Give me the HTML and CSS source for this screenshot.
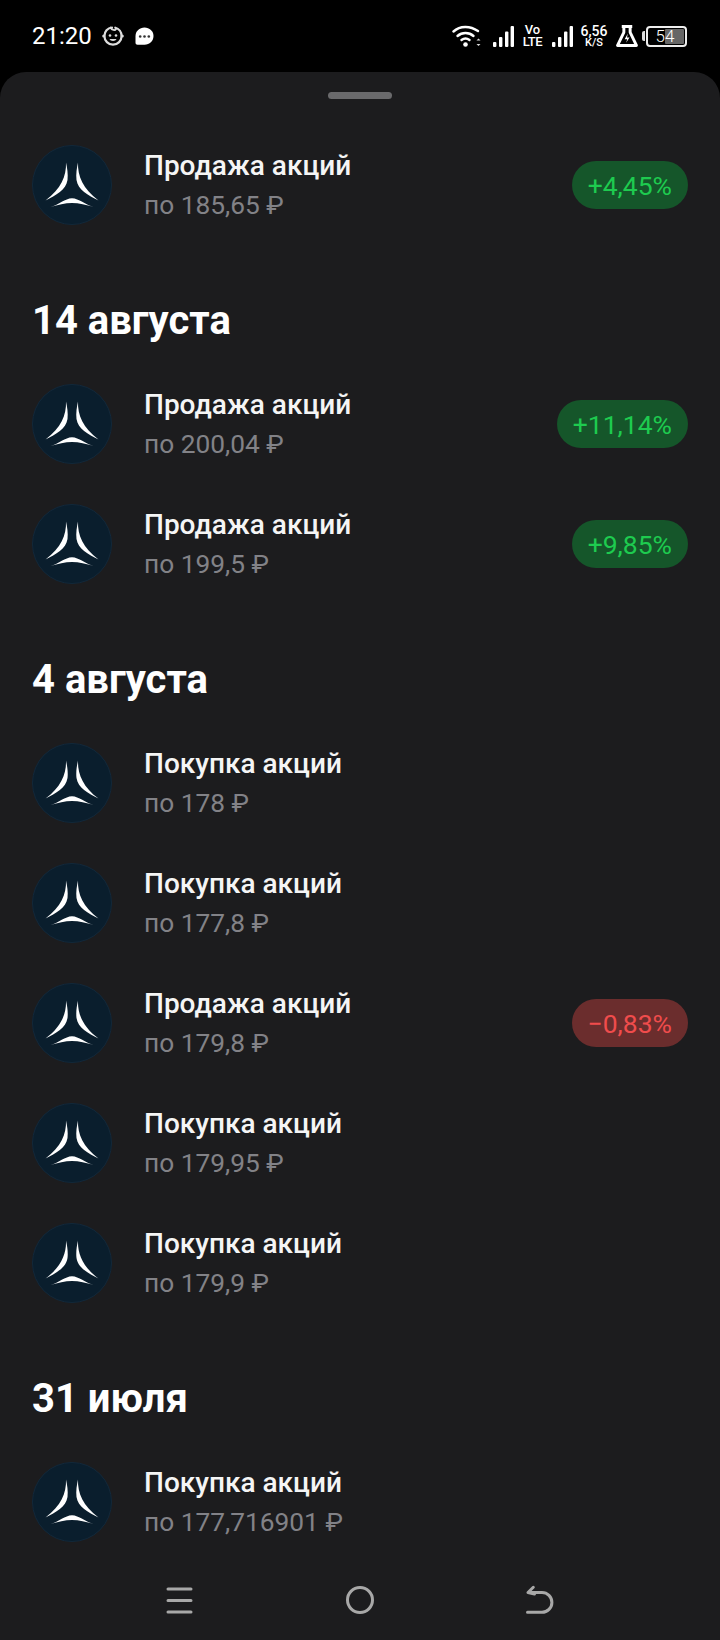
FILE: index.html
```html
<!DOCTYPE html>
<html lang="ru">
<head>
<meta charset="utf-8">
<title>Операции</title>
<link rel="stylesheet" href="styles.css">
</head>
<body>
<svg class="defs" width="0" height="0" aria-hidden="true">
  <symbol id="logo" viewBox="0 0 80 80">
    <circle cx="40" cy="40" r="39.5" fill="#0a1e2d" stroke="#12283a" stroke-width="1"/>
    <path d="M34 17.500C34.500 31 29 44 13.500 55.500C24 50 34 45 35.500 35C36.200 29 35.200 23 34 17.500Z" fill="#fff"/>
    <path d="M46 17.500C45.500 31 51 44 66.500 55.500C56 50 46 45 44.500 35C43.800 29 44.800 23 46 17.500Z" fill="#fff"/>
    <path d="M18.500 62C27 59.500 33 53.500 40 53.200C47 53.500 53 59.500 62 62C54 60 47 58 40 58C33 58 26 60 18.500 62Z" fill="#fff"/>
  </symbol>
</svg>
<div class="phone">
  <header class="status">
    <div class="status-left">
      <span class="time">21:20</span>
      <svg class="ic-baby" viewBox="0 0 22 22"><path d="M10 2.500C5.500 2.800 2.400 6.500 2.400 11c0 4.800 3.800 8.600 8.600 8.600s8.600-3.800 8.600-8.600c0-4-2.700-7.300-6.300-8.300" fill="none" stroke="#ddd" stroke-width="2.200" stroke-linecap="round"/><path d="M8.500 2.500c1.500 2.800 4.500 3.300 5.500 1.500" fill="none" stroke="#ddd" stroke-width="1.800" stroke-linecap="round"/><circle cx="1.800" cy="11" r="1.600" fill="#ddd"/><circle cx="20.200" cy="11" r="1.600" fill="#ddd"/><circle cx="8" cy="10.500" r="1.300" fill="#ddd"/><circle cx="14" cy="10.500" r="1.300" fill="#ddd"/><path d="M7.500 14h7c-.8 2.600-6.200 2.600-7 0Z" fill="#ddd"/></svg>
      <svg class="ic-msg" viewBox="0 0 19 19"><path d="M9.500 0.500c5 0 9 3.600 9 8.500s-4 8.800-9 8.800H2.500c-1.200 0-2-.8-2-2V9C.5 4.100 4.500.5 9.500.5Z" fill="#fff"/><circle cx="5.200" cy="9.500" r="1.300" fill="#333"/><circle cx="9.500" cy="9.500" r="1.300" fill="#333"/><circle cx="13.800" cy="9.500" r="1.300" fill="#333"/></svg>
    </div>
    <div class="status-right">
      <svg class="ic-wifi" viewBox="0 0 29 24"><g fill="none" stroke="#fff" stroke-width="2.400" stroke-linecap="round"><path d="M1.500 7.500C8 1.500 18 1.500 26 7"/><path d="M5.500 12C10 8 17 8 21.500 12"/><path d="M9.500 16C12 14 15 14 17.500 16"/></g><circle cx="13.500" cy="20.500" r="2.300" fill="#fff"/><path d="M26.500 14.500l-2 2h4ZM26.500 22l-2-2h4Z" fill="#ddd"/></svg>
      <svg class="ic-signal" viewBox="0 0 21 21"><rect x="0" y="16" width="3.400" height="5" rx="1" fill="#fff"/><rect x="6" y="11" width="3.400" height="10" rx="1" fill="#fff"/><rect x="12" y="5.500" width="3.400" height="15.500" rx="1" fill="#fff"/><rect x="17.600" y="0" width="3.400" height="21" rx="1" fill="#fff"/></svg>
      <div class="volte"><span>Vo</span><span class="lte">LTE</span></div>
      <svg class="ic-signal sig-2" viewBox="0 0 21 21"><rect x="0" y="16" width="3.400" height="5" rx="1" fill="#fff"/><rect x="6" y="11" width="3.400" height="10" rx="1" fill="#fff"/><rect x="12" y="5.500" width="3.400" height="15.500" rx="1" fill="#fff"/><rect x="17.600" y="0" width="3.400" height="21" rx="1" fill="#fff"/></svg>
      <div class="speed"><span class="speed-num">6,56</span><span class="speed-unit">K/S</span></div>
      <svg class="ic-flask" viewBox="0 0 21 21"><path d="M5.500 1.500h10M7.500 1.500v5.500L1.500 19.500h18L13.500 7V1.500" fill="none" stroke="#fff" stroke-width="2.800" stroke-linejoin="round"/><path d="M11.300 8l-3 5.500h2.400L9.700 17l3.200-5h-2.400Z" fill="#fff"/></svg>
      <div class="battery">
        <span class="bat-tip"></span>
        <div class="bat-body"><span class="bat-fill"></span><span class="bat-num">54</span></div>
      </div>
    </div>
  </header>

  <main class="sheet">
    <div class="handle"></div>

    <section class="list">
      <div class="row"><svg class="logo"><use href="#logo"/></svg><div class="info"><div class="title">Продажа акций</div><div class="sub">по 185,65 ₽</div></div><span class="pill up">+4,45%</span></div>
    </section>

    <h2 class="date">14 августа</h2>
    <section class="list">
      <div class="row"><svg class="logo"><use href="#logo"/></svg><div class="info"><div class="title">Продажа акций</div><div class="sub">по 200,04 ₽</div></div><span class="pill up">+11,14%</span></div>
      <div class="row"><svg class="logo"><use href="#logo"/></svg><div class="info"><div class="title">Продажа акций</div><div class="sub">по 199,5 ₽</div></div><span class="pill up">+9,85%</span></div>
    </section>

    <h2 class="date">4 августа</h2>
    <section class="list">
      <div class="row"><svg class="logo"><use href="#logo"/></svg><div class="info"><div class="title">Покупка акций</div><div class="sub">по 178 ₽</div></div></div>
      <div class="row"><svg class="logo"><use href="#logo"/></svg><div class="info"><div class="title">Покупка акций</div><div class="sub">по 177,8 ₽</div></div></div>
      <div class="row"><svg class="logo"><use href="#logo"/></svg><div class="info"><div class="title">Продажа акций</div><div class="sub">по 179,8 ₽</div></div><span class="pill down">−0,83%</span></div>
      <div class="row"><svg class="logo"><use href="#logo"/></svg><div class="info"><div class="title">Покупка акций</div><div class="sub">по 179,95 ₽</div></div></div>
      <div class="row"><svg class="logo"><use href="#logo"/></svg><div class="info"><div class="title">Покупка акций</div><div class="sub">по 179,9 ₽</div></div></div>
    </section>

    <h2 class="date">31 июля</h2>
    <section class="list">
      <div class="row"><svg class="logo"><use href="#logo"/></svg><div class="info"><div class="title">Покупка акций</div><div class="sub">по 177,716901 ₽</div></div></div>
    </section>

    <nav class="nav">
      <svg class="nav-ic" viewBox="0 0 30 30"><g stroke="#a8a8a8" stroke-width="3" stroke-linecap="round"><path d="M3 4h23M3 15.500h23M3 27h23"/></g></svg>
      <svg class="nav-ic" viewBox="0 0 30 30"><circle cx="15" cy="15" r="12.500" fill="none" stroke="#a8a8a8" stroke-width="3"/></svg>
      <svg class="nav-ic" viewBox="0 0 30 30"><path d="M3 7.500h14a9.900 9.900 0 0 1 0 19.800H2.500M8.300 2.300L3 7.500l6.500 1.500" fill="none" stroke="#a8a8a8" stroke-width="3" stroke-linecap="round" stroke-linejoin="round"/></svg>
    </nav>
  </main>
</div>
</body>
</html>
```

FILE: styles.css
```css
* { box-sizing: border-box; }
html, body { margin: 0; padding: 0; background: #000; }
body { font-family: Roboto, "Noto Sans", sans-serif; color: #fff; }
.defs { display: block; height: 0; }
.phone { width: 720px; height: 1640px; display: flex; flex-direction: column; overflow: hidden; }

.status { height: 72px; flex: none; display: flex; align-items: center; justify-content: space-between; padding: 0 33px 0 32px; }
.status-left, .status-right { display: flex; align-items: center; }
.time { font-size: 24px; line-height: 28px; color: #fff; }
.ic-baby { width: 22px; height: 22px; margin-left: 10px; }
.ic-msg { width: 19px; height: 19px; margin-left: 11px; }
.ic-wifi { width: 29px; height: 24px; }
.ic-signal { width: 21px; height: 21px; margin-left: 12px; }
.sig-2 { margin-left: 9px; }
.volte { display: flex; flex-direction: column; align-items: center; margin-left: 8px; font-size: 13px; line-height: 12px; font-weight: 500; width: 21px; }
.lte { letter-spacing: -0.4px; }
.speed { display: flex; flex-direction: column; align-items: center; margin-left: 7px; width: 28px; font-weight: 500; }
.speed-num { font-size: 14px; line-height: 13px; }
.speed-unit { font-size: 11px; line-height: 10px; }
.ic-flask { width: 22px; height: 22px; margin-left: 8px; }
.battery { display: flex; align-items: center; margin-left: 4px; }
.bat-tip { width: 3px; height: 10px; background: #ddd; border-radius: 2px 0 0 2px; margin-right: 1px; }
.bat-body { position: relative; width: 41px; height: 21px; border: 2px solid #eee; border-radius: 4px; display: flex; align-items: center; justify-content: center; padding-right: 3px; }
.bat-fill { position: absolute; right: 1px; top: 1px; bottom: 1px; width: 19px; background: #666; border-radius: 1px; }
.bat-num { position: relative; font-size: 17px; line-height: 17px; font-weight: 300; color: #fff; }

.sheet { flex: 1; min-height: 0; background: #1c1c1e; border-radius: 26px 26px 0 0; display: flex; flex-direction: column; }
.handle { flex: none; width: 64px; height: 7px; margin: 20px auto 26px; background: #6a6a6c; border-radius: 4px; }

.list { display: flex; flex-direction: column; }
.row { height: 120px; display: flex; align-items: center; padding: 0 32px; }
.logo { width: 80px; height: 80px; flex: none; }
.info { flex: 1; min-width: 0; margin-left: 32px; padding-top: 1px; }
.title { font-size: 28px; line-height: 36px; font-weight: 500; color: #f5f5f5; }
.sub { font-size: 26.3px; line-height: 36px; margin-top: 3px; color: #828287; }
.pill { height: 48px; padding: 0 16px; border-radius: 24px; display: flex; align-items: center; font-size: 26.5px; font-weight: 400; }
.up { background: #15562a; color: #1ecb4f; }
.down { background: #6b2d2d; color: #f04c4c; }

.date { height: 119px; margin: 0; padding: 54px 32px 0; font-size: 40px; line-height: 44px; font-weight: 700; color: #fff; }

.nav { flex: none; height: 78px; display: flex; justify-content: center; gap: 150px; align-items: flex-start; padding-top: 23px; background: #1c1c1e; }
.nav-ic { width: 30px; height: 30px; }
```
